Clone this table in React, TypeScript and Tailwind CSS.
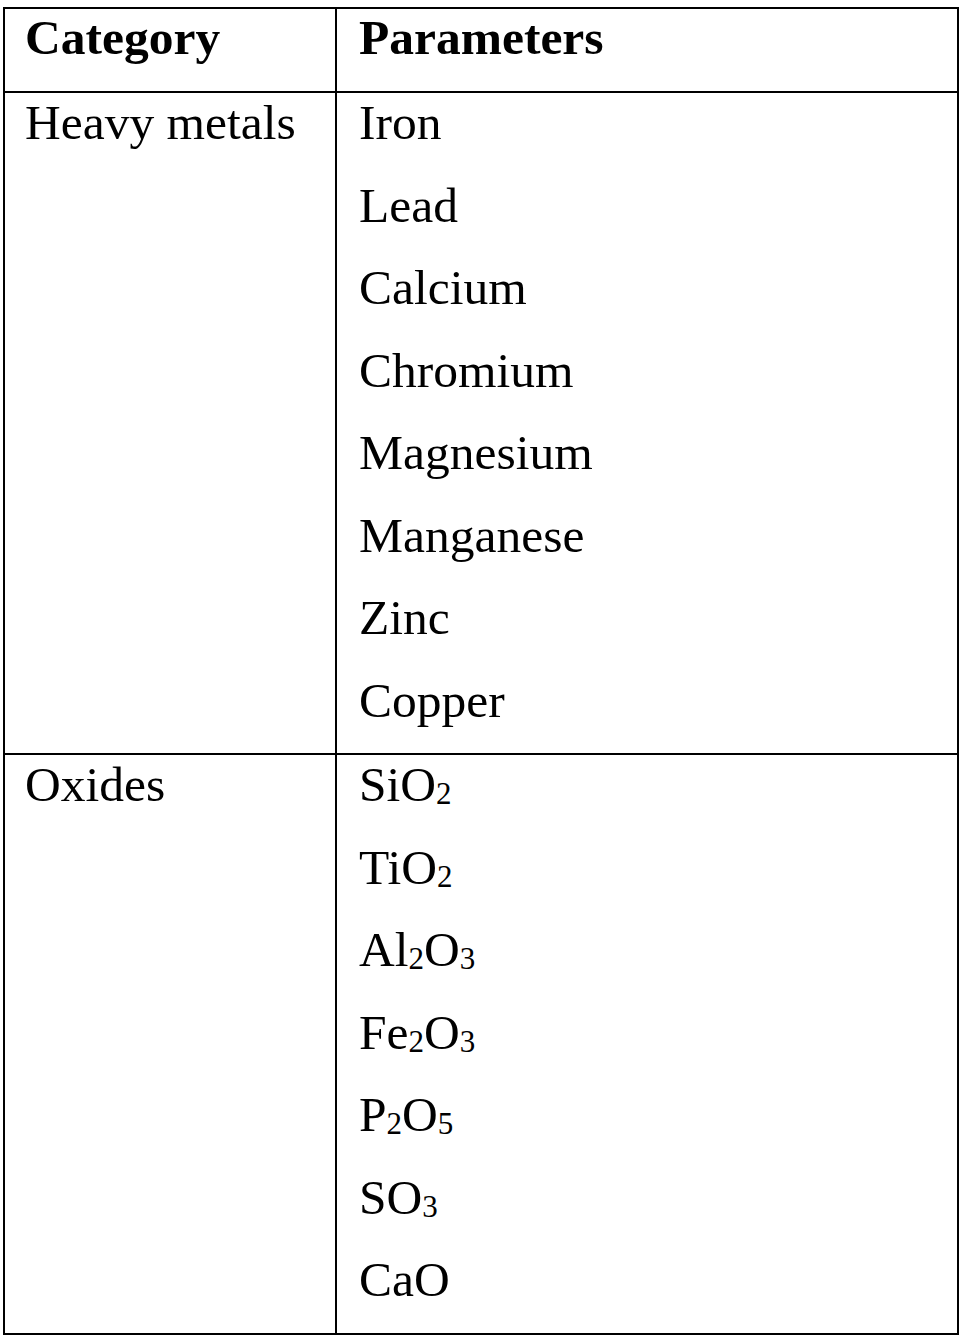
const heavyMetals = ["Iron", "Lead", "Calcium", "Chromium", "Magnesium", "Manganese", "Zinc", "Copper"]

type Part = { t: string; sub?: boolean }

const oxides: Part[][] = [
  [{ t: "SiO" }, { t: "2", sub: true }],
  [{ t: "TiO" }, { t: "2", sub: true }],
  [{ t: "Al" }, { t: "2", sub: true }, { t: "O" }, { t: "3", sub: true }],
  [{ t: "Fe" }, { t: "2", sub: true }, { t: "O" }, { t: "3", sub: true }],
  [{ t: "P" }, { t: "2", sub: true }, { t: "O" }, { t: "5", sub: true }],
  [{ t: "SO" }, { t: "3", sub: true }],
  [{ t: "CaO" }],
]

function Line({ children }: { children: React.ReactNode }) {
  return <div className="h-[82.5px] leading-[60px] whitespace-nowrap">{children}</div>
}

export default function App() {
  return (
    <div className="min-h-screen bg-white pt-[7px] pl-[3px] text-black text-[49.5px] font-['Liberation_Serif',serif]">
      <div className="w-[956px] border-2 border-black">
        <div className="flex border-b-2 border-black">
          <div className="w-[332px] shrink-0 border-r-2 border-black pl-[20px] h-[82px] leading-[58px] font-bold">
            Category
          </div>
          <div className="flex-1 pl-[22px] h-[82px] leading-[58px] font-bold">Parameters</div>
        </div>

        <div className="flex border-b-2 border-black">
          <div className="w-[332px] shrink-0 border-r-2 border-black pl-[20px]">
            <Line>Heavy metals</Line>
          </div>
          <div className="flex-1 pl-[22px]">
            {heavyMetals.map((m) => (
              <Line key={m}>{m}</Line>
            ))}
          </div>
        </div>

        <div className="flex">
          <div className="w-[332px] shrink-0 border-r-2 border-black pl-[20px]">
            <Line>Oxides</Line>
          </div>
          <div className="flex-1 pl-[22px]">
            {oxides.map((parts, i) => (
              <Line key={i}>
                {parts.map((p, j) =>
                  p.sub ? (
                    <span key={j} className="relative top-[3px] text-[31px]">
                      {p.t}
                    </span>
                  ) : (
                    <span key={j}>{p.t}</span>
                  ),
                )}
              </Line>
            ))}
          </div>
        </div>
      </div>
    </div>
  )
}
